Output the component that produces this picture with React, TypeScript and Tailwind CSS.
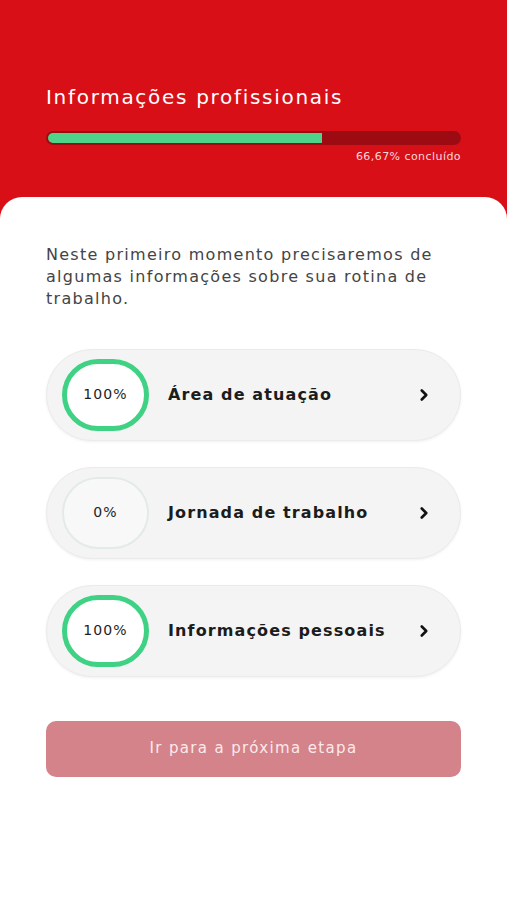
import { ChevronRight } from 'lucide-react'

type Step = { pct: number; label: string }

const steps: Step[] = [
  { pct: 100, label: 'Área de atuação' },
  { pct: 0, label: 'Jornada de trabalho' },
  { pct: 100, label: 'Informações pessoais' },
]

function StepCard({ step }: { step: Step }) {
  const done = step.pct === 100
  return (
    <button className="w-full h-[92px] rounded-full bg-[#f4f4f4] border border-[#ebebeb] shadow-[0_1px_3px_rgba(0,0,0,0.06)] flex items-center pl-[15px] pr-[27px] text-left">
      <div
        className={
          done
            ? 'w-[87px] h-[72px] rounded-full bg-white border-[5px] border-[#3fd184] flex items-center justify-center shrink-0'
            : 'w-[87px] h-[72px] rounded-full bg-[#f8f8f8] border-2 border-[#e2ebe5] flex items-center justify-center shrink-0'
        }
      >
        <span className="text-[14px] text-[#1e1e1e] tracking-[0.08em]">{step.pct}%</span>
      </div>
      <span className="ml-[19px] flex-1 text-[16px] font-bold text-[#1c1c1c] tracking-[0.07em]">{step.label}</span>
      <ChevronRight size={18} strokeWidth={3.5} className="text-[#111]" />
    </button>
  )
}

export default function App() {
  return (
    <div className="min-h-[900px] bg-[#d90f18] flex flex-col font-['DejaVu_Sans','Noto_Sans',sans-serif]">
      <header className="px-[46px] pt-[84px] pb-[31px]">
        <h1 className="text-white text-[20px] leading-[26px] tracking-[0.085em]">Informações profissionais</h1>
        <div className="mt-[21px] h-[14px] rounded-full bg-[#9d0b12] overflow-hidden p-[2px]">
          <div className="h-full w-[66.67%] rounded-l-full bg-[#4fd38a]"></div>
        </div>
        <p className="mt-[4px] text-right text-[11px] text-[#f7d9da] tracking-[0.04em]">66,67% concluído</p>
      </header>

      <main className="flex-1 bg-white rounded-t-[22px] px-[46px] pt-[47px]">
        <p className="text-[16px] leading-[22px] text-[#444] tracking-[0.08em]">
          Neste primeiro momento precisaremos de algumas informações sobre sua rotina de trabalho.
        </p>

        <div className="mt-[39px] flex flex-col gap-[26px]">
          {steps.map((s) => (
            <StepCard key={s.label} step={s} />
          ))}
        </div>

        <button className="mt-[44px] w-full h-[56px] rounded-[10px] bg-[#d4838a] text-[#fbeaea] text-[15px] tracking-[0.09em]">
          Ir para a próxima etapa
        </button>
      </main>
    </div>
  )
}
